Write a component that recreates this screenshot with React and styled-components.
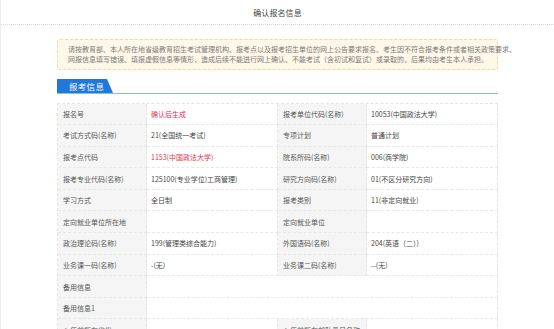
import React from "react";
import styled, { createGlobalStyle } from "styled-components";

const Global = createGlobalStyle`
  html, body { margin: 0; padding: 0; background: #fff; }
  body { font-family: "Noto Sans CJK SC", "Noto Sans", sans-serif; color: #555; }
`;

const Page = styled.div`
  width: 554px;
  height: 329px;
  overflow: hidden;
  box-sizing: border-box;
  border-left: 1px solid #ececec;
  background: #fff;
`;

const Header = styled.div`
  height: 24px;
  display: flex;
  align-items: center;
  justify-content: center;
  border-bottom: 1px dotted #d8d8d8;
  font-size: 8px;
  color: #444;
  letter-spacing: 0.1px;
`;

const Content = styled.div`
  width: 441px;
  margin: 14px auto 0;
`;

const Notice = styled.div`
  box-sizing: border-box;
  height: 31px;
  padding: 4px 10px 0;
  background: #fff8e8;
  border: 1px dashed #f3d79b;
  border-radius: 3px;
  font-size: 7px;
  line-height: 10px;
  color: #7a7a7a;
  white-space: nowrap;
`;

const TabBar = styled.div`
  margin-top: 9px;
  display: flex;
  border-bottom: 1.5px solid #8fb9ee;
`;

const Tab = styled.div`
  height: 14px;
  width: 56px;
  padding-left: 12px;
  box-sizing: border-box;
  display: flex;
  align-items: center;
  background: #1f78da;
  clip-path: polygon(0 0, 50px 0, 56px 100%, 0 100%);
  color: #fff;
  font-size: 8.5px;
  letter-spacing: 0.3px;
`;

const Grid = styled.div`
  margin-top: 8.5px;
  display: grid;
  grid-template-columns: 89px 131px 89px 1fr;
  border-top: 1px dashed #e4e4e4;
  border-left: 1px dashed #e4e4e4;
`;

const Cell = styled.div`
  box-sizing: border-box;
  height: 21.6px;
  display: flex;
  align-items: center;
  padding-left: ${(p) => (p.$label ? 5 : 4)}px;
  font-size: 7px;
  color: ${(p) => (p.$red ? "#e8334a" : p.$label ? "#555" : "#444")};
  background: ${(p) => (p.$label ? "#f5f5f5" : "#fff")};
  border-right: 1px dashed #e4e4e4;
  border-bottom: 1px dashed #e8e8e8;
  grid-column: ${(p) => (p.$span ? `span ${p.$span}` : "auto")};
  white-space: nowrap;
  overflow: hidden;
`;

const rows = [
  [["报名号"], ["确认后生成", { red: true }], ["报考单位代码(名称)"], ["10053(中国政法大学)"]],
  [["考试方式码(名称)"], ["21(全国统一考试)"], ["专项计划"], ["普通计划"]],
  [["报考点代码"], ["1153(中国政法大学)", { red: true }], ["院系所码(名称)"], ["006(商学院)"]],
  [["报考专业代码(名称)"], ["125100(专业学位)工商管理)"], ["研究方向码(名称)"], ["01(不区分研究方向)"]],
  [["学习方式"], ["全日制"], ["报考类别"], ["11(非定向就业)"]],
  [["定向就业单位所在地"], [""], ["定向就业单位"], [""]],
  [["政治理论码(名称)"], ["199(管理类综合能力)"], ["外国语码(名称)"], ["204(英语（二）)"]],
  [["业务课一码(名称)"], ["-(无)"], ["业务课二码(名称)"], ["--(无)"]],
  [["备用信息"], ["", { span: 3 }]],
  [["备用信息1"], ["", { span: 3 }]],
  [["入伍前所在省份"], [""], ["入伍前所在部队番号名称"], [""]],
];

export default function App() {
  return (
    <Page>
      <Global />
      <Header>确认报名信息</Header>
      <Content>
        <Notice>
          请按教育部、本人所在地省级教育招生考试管理机构、报考点以及报考招生单位的网上公告要求报名。考生因不符合报考条件或者相关政策要求、
          <br />
          网报信息填写错误、填报虚假信息等情形，造成后续不能进行网上确认、不能考试（含初试和复试）或录取的，后果均由考生本人承担。
        </Notice>
        <TabBar>
          <Tab>报考信息</Tab>
        </TabBar>
        <Grid>
          {rows.map((row, i) =>
            row.map(([text, opt = {}], j) => (
              <Cell
                key={`${i}-${j}`}
                $label={j % 2 === 0}
                $red={opt.red}
                $span={opt.span}
              >
                {text}
              </Cell>
            ))
          )}
        </Grid>
      </Content>
    </Page>
  );
}
